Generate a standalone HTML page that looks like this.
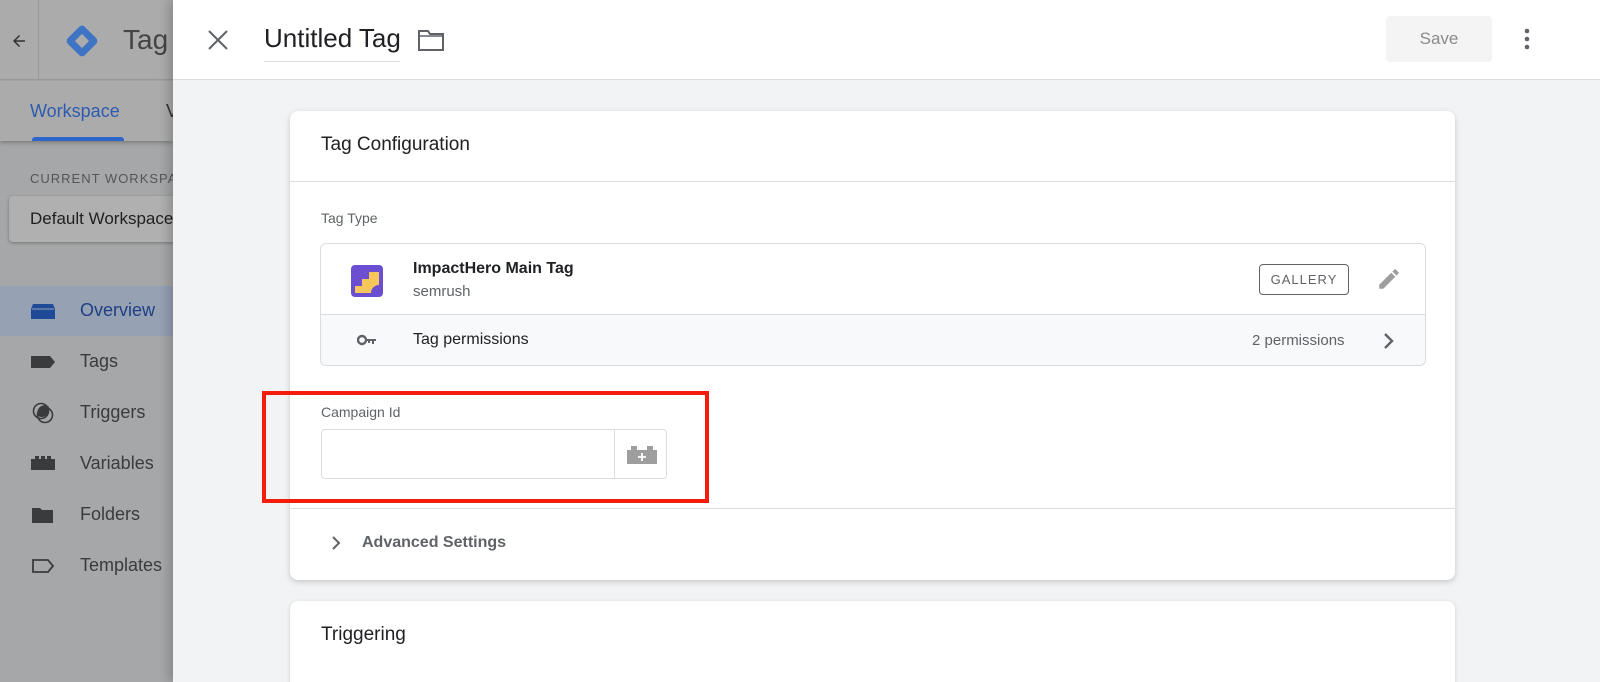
<!DOCTYPE html>
<html><head><meta charset="utf-8"><style>
*{box-sizing:border-box;margin:0;padding:0}
html,body{width:1600px;height:682px;overflow:hidden}
body{font-family:"Liberation Sans",Arial,sans-serif;background:#f1f3f4;position:relative}
.side{position:absolute;left:0;top:0;width:173px;height:682px;background:#a6a7a8;overflow:hidden;white-space:nowrap}
.sh{position:absolute;top:0;left:0;width:173px;height:80px;background:#ababab;border-bottom:1px solid #9a9a9a}
.st{position:absolute;top:81px;left:0;width:173px;height:60px;background:#ababab;box-shadow:0 2px 4px rgba(0,0,0,.25)}
.nav{position:absolute;left:0;width:173px;height:50px;font-size:18px;color:#3a3b3d}
.nav span{position:absolute;left:80px;top:14px}
.nav svg{position:absolute;left:30px;top:14px}
.panel{position:absolute;left:173px;top:0;width:1427px;height:682px;background:#f1f3f4;box-shadow:-4px 0 10px rgba(0,0,0,.2);overflow:hidden}
.top{position:absolute;left:0;top:0;width:1427px;height:80px;background:#fff;border-bottom:1px solid #dadce0}
.card{position:absolute;left:117px;top:111px;width:1165px;height:469px;background:#fff;border-radius:8px;box-shadow:0 2px 6px rgba(0,0,0,.18)}
.card2{position:absolute;left:117px;top:601px;width:1165px;height:100px;background:#fff;border-radius:8px;box-shadow:0 1px 4px rgba(0,0,0,.15)}
.lbl{font-size:14px;color:#5f6368}
</style></head><body>
<div class="side">
 <div class="sh">
  <svg style="position:absolute;left:10px;top:32px" width="18" height="18" viewBox="0 0 24 24"><path d="M20 11H7.8l5.6-5.6L12 4l-8 8 8 8 1.4-1.4L7.8 13H20z" fill="#333"/></svg>
  <div style="position:absolute;left:38px;top:0;width:1px;height:80px;background:#999"></div>
  <svg style="position:absolute;left:62px;top:21px" width="40" height="40" viewBox="0 0 40 40"><rect x="8" y="8" width="24" height="24" rx="4" transform="rotate(45 20 20)" fill="#3f74c5"/><rect x="15" y="15" width="10" height="10" transform="rotate(45 20 20)" fill="#ababab"/></svg>
  <div style="position:absolute;left:123px;top:24px;font-size:28px;color:#454545">Tag</div>
 </div>
 <div class="st">
  <div style="position:absolute;left:30px;top:20px;font-size:18px;color:#2d5bb0">Workspace</div>
  <div style="position:absolute;left:166px;top:20px;font-size:18px;color:#333">V</div>
  <div style="position:absolute;left:32px;top:56px;width:92px;height:4px;background:#2d66c8;border-radius:3px 3px 0 0"></div>
 </div>
 <div style="position:absolute;left:30px;top:171px;font-size:13px;letter-spacing:1px;color:#555">CURRENT WORKSPACE</div>
 <div style="position:absolute;left:9px;top:196px;width:180px;height:46px;background:#b0b0b0;border-radius:4px;box-shadow:0 1px 3px rgba(0,0,0,.3)"><span style="position:absolute;left:21px;top:13px;font-size:17px;color:#1f1f1f">Default Workspace</span></div>
 <div class="nav" style="top:286px;background:#96a1b4;color:#1f3f85"><svg width="26" height="22" viewBox="0 0 26 22"><path d="M3 4h20l2 5v10H1V9z" fill="#1f4a98"/><path d="M2 9h22" stroke="#96a1b4" stroke-width="1"/></svg><span>Overview</span></div>
 <div class="nav" style="top:337px"><svg width="26" height="22" viewBox="0 0 26 22"><path d="M1 5h19l5 6-5 6H1z" fill="#3a3b3d"/></svg><span>Tags</span></div>
 <div class="nav" style="top:388px"><svg width="26" height="22" viewBox="0 0 26 22"><circle cx="11" cy="9" r="7.5" fill="none" stroke="#3a3b3d" stroke-width="1.6"/><circle cx="15" cy="13" r="7.5" fill="none" stroke="#3a3b3d" stroke-width="1.6"/><path d="M8 14a7.5 7.5 0 0 1 10.5-9.8A7.5 7.5 0 0 1 8 14z" fill="#3a3b3d"/></svg><span>Triggers</span></div>
 <div class="nav" style="top:439px"><svg width="26" height="22" viewBox="0 0 26 22"><path d="M1 6h4V3h4v3h2V3h4v3h2V3h4v3h4v11H1z" fill="#3a3b3d"/></svg><span>Variables</span></div>
 <div class="nav" style="top:490px"><svg width="26" height="22" viewBox="0 0 26 22"><path d="M2 4h8l2 2h11v13H2z" fill="#3a3b3d"/></svg><span>Folders</span></div>
 <div class="nav" style="top:541px"><svg width="26" height="22" viewBox="0 0 26 22"><path d="M3 5h15l5 6-5 6H3z" fill="none" stroke="#3a3b3d" stroke-width="1.8"/></svg><span>Templates</span></div>
</div>
<div class="panel">
 <div class="top">
  <svg style="position:absolute;left:34px;top:29px" width="22" height="22" viewBox="0 0 22 22"><path d="M2 2l18 18M20 2L2 20" stroke="#5f6368" stroke-width="2"/></svg>
  <div style="position:absolute;left:91px;top:23px;font-size:26px;color:#202124">Untitled Tag</div>
  <div style="position:absolute;left:91px;top:61px;width:136px;height:1px;background:#dadce0"></div>
  <svg style="position:absolute;left:244px;top:28px" width="28" height="24" viewBox="0 0 28 24"><path d="M2 3h9l2 3h13v16H2z" fill="none" stroke="#5f6368" stroke-width="2"/><path d="M2 8h24" stroke="#5f6368" stroke-width="1.5"/></svg>
  <div style="position:absolute;left:1213px;top:16px;width:106px;height:46px;background:#f4f4f4;border-radius:4px;font-size:17px;color:#8a8a8a;text-align:center;line-height:46px">Save</div>
  <svg style="position:absolute;left:1347px;top:27px" width="14" height="24" viewBox="0 0 14 24"><circle cx="7" cy="4" r="2.3" fill="#5f6368"/><circle cx="7" cy="12" r="2.3" fill="#5f6368"/><circle cx="7" cy="20" r="2.3" fill="#5f6368"/></svg>
 </div>
 <div class="card">
  <div style="position:absolute;left:31px;top:23px;font-size:19px;color:#202124">Tag Configuration</div>
  <div style="position:absolute;left:0;top:70px;width:1165px;height:1px;background:#dadce0"></div>
  <div class="lbl" style="position:absolute;left:31px;top:99px">Tag Type</div>
  <div style="position:absolute;left:30px;top:132px;width:1106px;height:123px;border:1px solid #dadce0;border-radius:6px;overflow:hidden">
   <svg style="position:absolute;left:30px;top:21px" width="32" height="32" viewBox="0 0 32 32"><rect width="32" height="32" rx="4" fill="#6b4fd0"/><path d="M4 28V21h7v-7h7V7h10v13a8 8 0 0 1-8 8z" fill="#f5c75a"/><path d="M20 28a8 8 0 0 1 8-8v8z" fill="#6b4fd0"/></svg>
   <div style="position:absolute;left:92px;top:16px;font-size:16px;color:#202124;font-weight:600">ImpactHero Main Tag</div>
   <div style="position:absolute;left:92px;top:39px;font-size:15px;color:#5f6368">semrush</div>
   <div style="position:absolute;left:938px;top:20px;width:90px;height:31px;border:1px solid #5f6368;border-radius:4px;font-size:13px;letter-spacing:1px;color:#5f6368;text-align:center;line-height:29px">GALLERY</div>
   <svg style="position:absolute;left:1055px;top:22px" width="26" height="26" viewBox="0 0 24 24"><path d="M3 17.25V21h3.75L17.8 9.94l-3.75-3.75zM20.7 7.04a1 1 0 0 0 0-1.41l-2.34-2.34a1 1 0 0 0-1.41 0l-1.83 1.83 3.75 3.75z" fill="#9e9e9e"/></svg>
   <div style="position:absolute;left:0;top:70px;width:1106px;height:53px;background:#f8f9fa;border-top:1px solid #dadce0">
    <svg style="position:absolute;left:36px;top:18px" width="20" height="14" viewBox="0 0 20 14"><circle cx="5" cy="7" r="4" fill="none" stroke="#5f6368" stroke-width="2.4"/><path d="M9 6h10v2h-2v3h-2V8h-2v2h-2V8H9z" fill="#5f6368"/></svg>
    <div style="position:absolute;left:92px;top:16px;font-size:16px;color:#202124">Tag permissions</div>
    <div style="position:absolute;left:931px;top:17px;font-size:15px;color:#5f6368">2 permissions</div>
    <svg style="position:absolute;left:1062px;top:17px" width="12" height="18" viewBox="0 0 12 18"><path d="M2 2l7 7-7 7" stroke="#5f6368" stroke-width="2.4" fill="none"/></svg>
   </div>
  </div>
  <div class="lbl" style="position:absolute;left:31px;top:293px">Campaign Id</div>
  <div style="position:absolute;left:31px;top:318px;width:346px;height:50px;border:1px solid #dadce0;border-radius:4px">
   <div style="position:absolute;left:292px;top:0;width:1px;height:48px;background:#dadce0"></div>
   <svg style="position:absolute;left:304px;top:13px" width="32" height="22" viewBox="0 0 32 22"><path d="M1 7h4V3h6v4h10V3h6v4h4v14H1z" fill="#9e9e9e"/><path d="M16 10v8M12 14h8" stroke="#fff" stroke-width="1.8"/></svg>
  </div>
  <div style="position:absolute;left:0;top:397px;width:1165px;height:1px;background:#dadce0"></div>
  <svg style="position:absolute;left:41px;top:424px" width="10" height="16" viewBox="0 0 10 16"><path d="M2 2l6 6-6 6" stroke="#5f6368" stroke-width="2" fill="none"/></svg>
  <div style="position:absolute;left:72px;top:423px;font-size:16px;color:#5f6368;font-weight:600">Advanced Settings</div>
 </div>
 <div class="card2"><div style="position:absolute;left:31px;top:23px;font-size:19px;color:#202124">Triggering</div></div>
</div>
<div style="position:absolute;left:262px;top:391px;width:447px;height:112px;border:4px solid #f41c0a"></div>
</body></html>
